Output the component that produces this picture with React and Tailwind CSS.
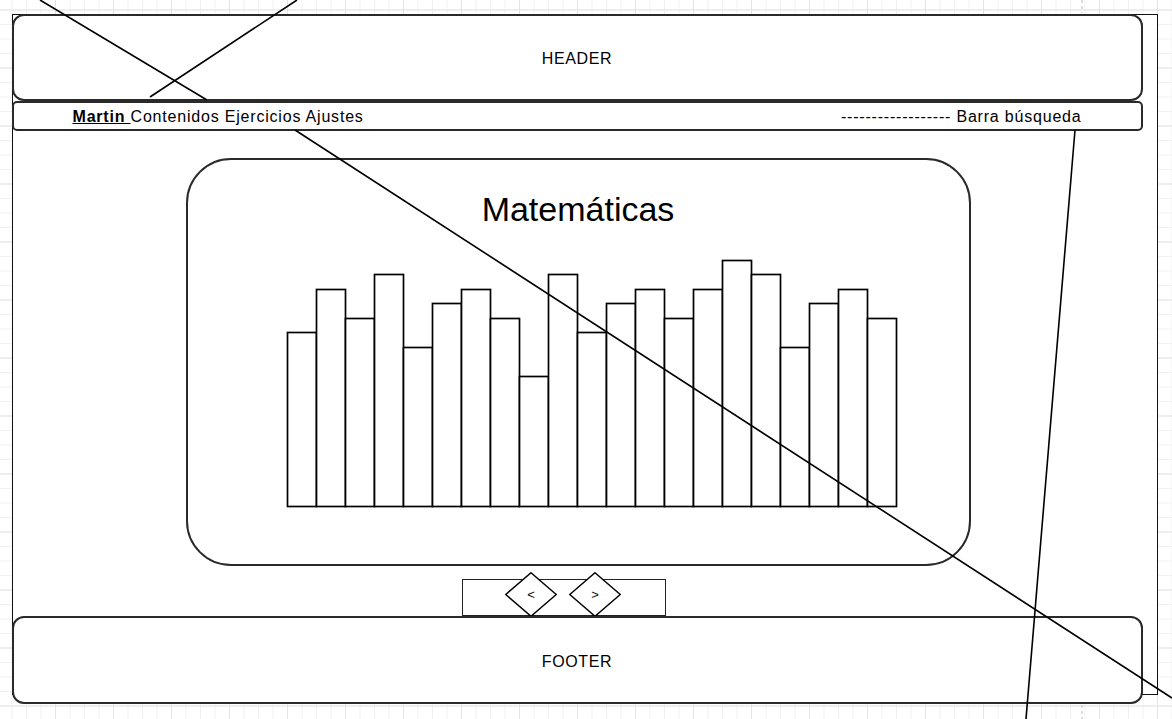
import React from "react";

const tops = [333, 290, 319, 275, 348, 304, 290, 319, 377, 275, 333, 304, 290, 319, 290, 261, 275, 348, 304, 290, 319];

function Chart() {
  return (
    <svg width="620" height="256" className="ml-[97.5px] mt-[28.5px] block" viewBox="0 0 620 256">
      {tops.map((t, i) => (
        <rect
          key={i}
          x={2.5 + 29 * i}
          y={t - 255 + 0.5}
          width={29}
          height={507 - t}
          fill="white"
          stroke="#000"
          strokeWidth="1.7"
        />
      ))}
    </svg>
  );
}

function Diamond({ label }) {
  return (
    <svg width="52" height="45" viewBox="0 0 52 45" className="block -mt-[8px]">
      <polygon points="26,0.75 51.25,22.5 26,44.25 0.75,22.5" fill="white" stroke="#000" strokeWidth="1.5" />
      <text x="26" y="27" textAnchor="middle" fontSize="13" fontFamily="Liberation Sans, Arial, sans-serif" fill="#111">
        {label}
      </text>
    </svg>
  );
}

export default function App() {
  return (
    <div className="relative w-[1172px] h-[719px] overflow-hidden bg-white pt-[14px] pl-[12px] font-['Liberation_Sans',Arial,sans-serif] text-black bg-[linear-gradient(to_right,#e3e3e3_1px,transparent_1px),linear-gradient(to_bottom,#e3e3e3_1px,transparent_1px),linear-gradient(to_right,#f0f0f0_1px,transparent_1px),linear-gradient(to_bottom,#f0f0f0_1px,transparent_1px)] bg-size-[58px_58px,58px_58px,14.5px_14.5px,14.5px_14.5px] bg-position-[-3px_9.5px,-3px_9.5px,11.5px_9.5px,11.5px_9.5px]">
      <div className="w-[1146px] h-[681px] bg-white border-[1.5px] border-[#111]">
        <div className="-ml-[1.5px] -mt-[1.5px] w-[1131px] flex flex-col">
          <div className="h-[87px] rounded-[12px] border-2 border-[#2a2a2a] bg-white flex items-center justify-center pt-[4px] text-[16px] tracking-[0.6px]">
            HEADER
          </div>
          <div className="h-[30px] rounded-[5px] border-2 border-[#2a2a2a] bg-white flex items-center justify-between pt-[3px] px-[59px] text-[16px] tracking-[0.8px]">
            <div>
              <span className="font-bold underline">Martin </span>
              <span>Contenidos Ejercicios Ajustes</span>
            </div>
            <div>------------------ Barra búsqueda</div>
          </div>
          <div className="mt-[27px] ml-[174px] w-[785px] h-[408px] rounded-[45px] border-2 border-[#2a2a2a] bg-white flex flex-col">
            <div className="mt-[32px] w-full text-center text-[34px] leading-none">Matemáticas</div>
            <Chart />
          </div>
          <div className="mt-[13px] ml-[450px] w-[204px] h-[37px] border-[1.5px] border-[#222] bg-white flex items-start pl-[42px] gap-[12px]">
            <Diamond label="<" />
            <Diamond label=">" />
          </div>
          <div className="h-[88px] rounded-[12px] border-2 border-[#2a2a2a] bg-white flex items-center justify-center pt-[4px] text-[16px] tracking-[0.6px]">
            FOOTER
          </div>
        </div>
      </div>
      <svg className="absolute inset-0 pointer-events-none" width="1172" height="719" viewBox="0 0 1172 719">
        <line x1="1082" y1="0" x2="1082" y2="13" stroke="#bbb" strokeWidth="1" strokeDasharray="3 3" />
        <line x1="1082" y1="705" x2="1082" y2="719" stroke="#bbb" strokeWidth="1" strokeDasharray="3 3" />
        <g stroke="#000" strokeWidth="1.6" fill="none">
          <line x1="40" y1="0" x2="207" y2="100" />
          <line x1="297" y1="0" x2="150" y2="97" />
          <line x1="295" y1="130" x2="1172" y2="698" />
          <line x1="1075" y1="130" x2="1026" y2="719" />
        </g>
      </svg>
    </div>
  );
}
